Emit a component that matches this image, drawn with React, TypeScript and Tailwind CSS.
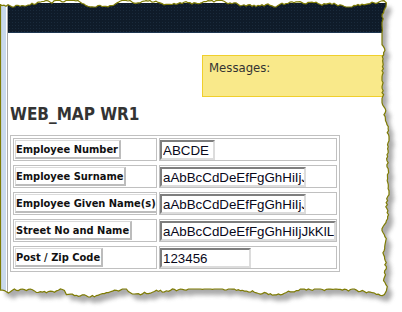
import React from "react";

function rng(seed: number) {
  let s = seed;
  return () => {
    s = (s * 1103515245 + 12345) & 0x7fffffff;
    return s / 0x7fffffff;
  };
}

function makeEdge(): string {
  const r = rng(11);
  const pts: [number, number][] = [];
  let y = 4;
  for (let x = 0; x <= 384; x += 2) {
    y += (r() - 0.5) * 3.2;
    if (r() < 0.04) y -= 2.5;
    y = Math.max(0.5, Math.min(7, y));
    pts.push([x, y]);
  }
  let x = 385;
  for (let yy = y + 2; yy <= 292; yy += 2) {
    x += (r() - 0.5) * 3.2;
    x = Math.max(382, Math.min(389, x));
    pts.push([x, yy]);
  }
  let by = 293;
  for (let xx = x - 2; xx >= 1; xx -= 2) {
    by += (r() - 0.5) * 3.2;
    if (r() < 0.04) by -= 2.5;
    by = Math.max(289, Math.min(297, by));
    pts.push([xx, by]);
  }
  pts.push([0.5, by]);
  pts.push([0.5, pts[0][1]]);
  return "M" + pts.map((p) => `${p[0].toFixed(1)} ${p[1].toFixed(1)}`).join("L") + "Z";
}

const EDGE = makeEdge();
const OUTSIDE = `M0 0H402V312H0Z ${EDGE}`;

const rows: { label: string; value: string; w: string }[] = [
  { label: "Employee Number", value: "ABCDE", w: "w-[55px]" },
  { label: "Employee Surname", value: "aAbBcCdDeEfFgGhHiIjJkKlLmMnN", w: "w-[146px]" },
  { label: "Employee Given Name(s)", value: "aAbBcCdDeEfFgGhHiIjJkKlLmMnN", w: "w-[146px]" },
  { label: "Street No and Name", value: "aAbBcCdDeEfFgGhHiIjJkKlLmMnN", w: "w-[176px]" },
  { label: "Post / Zip Code", value: "123456", w: "w-[91px]" },
];

export default function App() {
  const uiFont = { fontFamily: "'DejaVu Sans Condensed', 'DejaVu Sans', sans-serif", fontStretch: "condensed" as const };
  return (
    <div className="relative w-[402px] h-[312px] bg-white overflow-hidden">
      <div className="flex h-[296px]">
        {/* left strip */}
        <div className="flex h-full">
          <div className="w-[6px] bg-[#c9d9ec]" />
          <div className="w-[1px] bg-white" />
          <div className="w-[1px] bg-[#a9a9a9]" />
        </div>
        {/* page */}
        <div className="flex-1 flex flex-col">
          <div className="mt-[3px] h-[30px] bg-[#0f1b29] border-b border-[#1d3650] bg-[radial-gradient(circle,#1a2a3b_0.8px,transparent_1px)] bg-[length:3px_3px]" />
          <div
            className="mt-[22px] ml-[194px] h-[42px] bg-[#f9e98a] border border-[#f0cf2c] pl-[6px] pt-[4px] text-[13px] leading-[15px] text-[#333333]"
            style={uiFont}
          >
            Messages:
          </div>
          <div
            className="mt-[7px] ml-[2px] text-[17px] leading-[20px] font-bold text-[#333333]"
            style={uiFont}
          >
            WEB_MAP WR1
          </div>
          <div className="mt-[11px] ml-[2px] w-[330px] border border-[#c0c0c0] p-[2px] flex flex-col gap-[4px]">
            {rows.map((row) => (
              <div key={row.label} className="flex gap-[2px] h-[23px]">
                <div className="w-[144px] border border-[#c0c0c0] p-[1px] overflow-hidden flex items-start">
                  <div
                    className="flex items-center h-[19px] whitespace-nowrap border border-t-[#dadada] border-l-[#dadada] border-r-2 border-b-2 border-r-[#bcbcbc] border-b-[#bcbcbc] pr-[1px] text-[11px] leading-[13px] font-bold text-[#111111]"
                    style={uiFont}
                  >
                    {row.label}
                  </div>
                </div>
                <div className="flex-1 border border-[#c0c0c0] pt-[1px]">
                  <input
                    readOnly
                    value={row.value}
                    className={`${row.w} h-[20px] block border-2 border-t-[#7e7e7e] border-l-[#7e7e7e] border-r-[#dcdcdc] border-b-[#dcdcdc] pl-[1px] pr-0 py-0 bg-white text-[13.33px] text-[#08081a] outline-none`}
                    style={{ fontFamily: "'Liberation Sans', Arial, sans-serif" }}
                  />
                </div>
              </div>
            ))}
          </div>
        </div>
      </div>
      <svg className="absolute inset-0" width={402} height={312} viewBox="0 0 402 312">
        <defs>
          <clipPath id="outside">
            <path clipRule="evenodd" d={OUTSIDE} />
          </clipPath>
          <filter id="blur" x="-10%" y="-10%" width="120%" height="120%">
            <feGaussianBlur stdDeviation="2.2" />
          </filter>
        </defs>
        <path fillRule="evenodd" fill="#ffffff" d={OUTSIDE} />
        <g clipPath="url(#outside)">
          <path d={EDGE} transform="translate(5,6)" fill="#8f8f8f" opacity={0.75} filter="url(#blur)" />
        </g>
        <path d={EDGE} fill="none" stroke="#7f7c05" strokeWidth={1.2} />
      </svg>
    </div>
  );
}
